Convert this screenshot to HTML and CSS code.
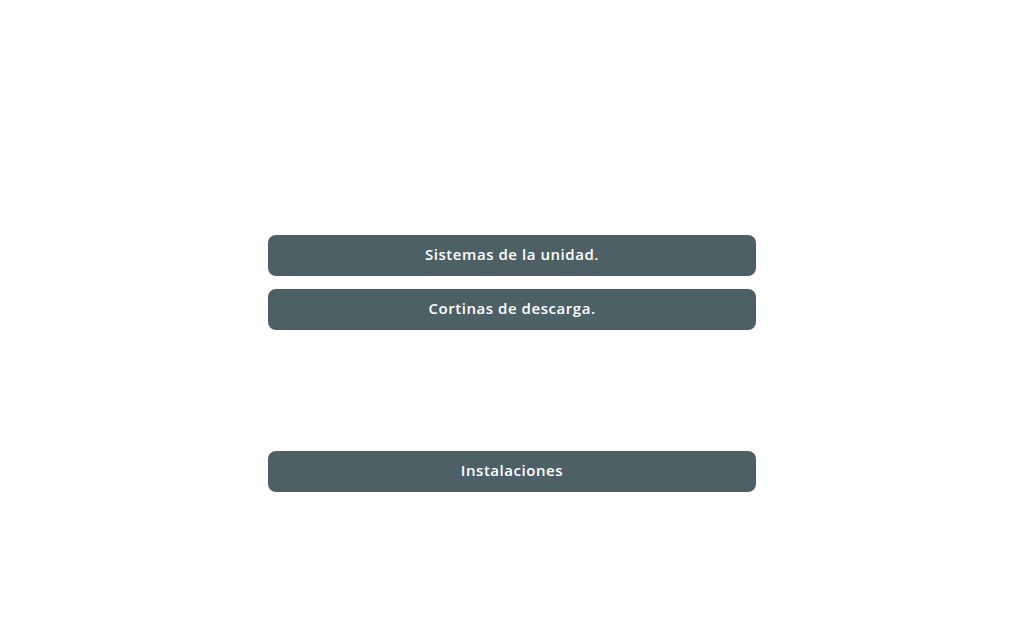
FILE: index.html
```html
<!DOCTYPE html>
<html lang="es">
<head>
<meta charset="utf-8">
<title>Menú</title>
<link rel="stylesheet" href="styles.css">
</head>
<body>
<main class="menu">
  <div class="group">
    <button class="btn">Sistemas de la unidad.</button>
    <button class="btn">Cortinas de descarga.</button>
  </div>
  <div class="group">
    <button class="btn">Instalaciones</button>
  </div>
</main>
</body>
</html>
```

FILE: styles.css
```css
html, body {
  margin: 0;
  padding: 0;
  background: #ffffff;
}
body {
  width: 1024px;
  height: 620px;
  overflow: hidden;
}
.menu {
  width: 488px;
  margin: 0 auto;
  padding-top: 235px;
  display: flex;
  flex-direction: column;
  gap: 121px;
}
.group {
  display: flex;
  flex-direction: column;
  gap: 13px;
}
.btn {
  display: block;
  width: 100%;
  height: 41px;
  border: 0;
  border-radius: 8px;
  background: #4d6066;
  color: #ffffff;
  font-family: "Open Sans", "DejaVu Sans", sans-serif;
  font-weight: 600;
  font-size: 15px;
  letter-spacing: 0.55px;
  padding: 0 0 4px;
  text-align: center;
  cursor: pointer;
}
```
